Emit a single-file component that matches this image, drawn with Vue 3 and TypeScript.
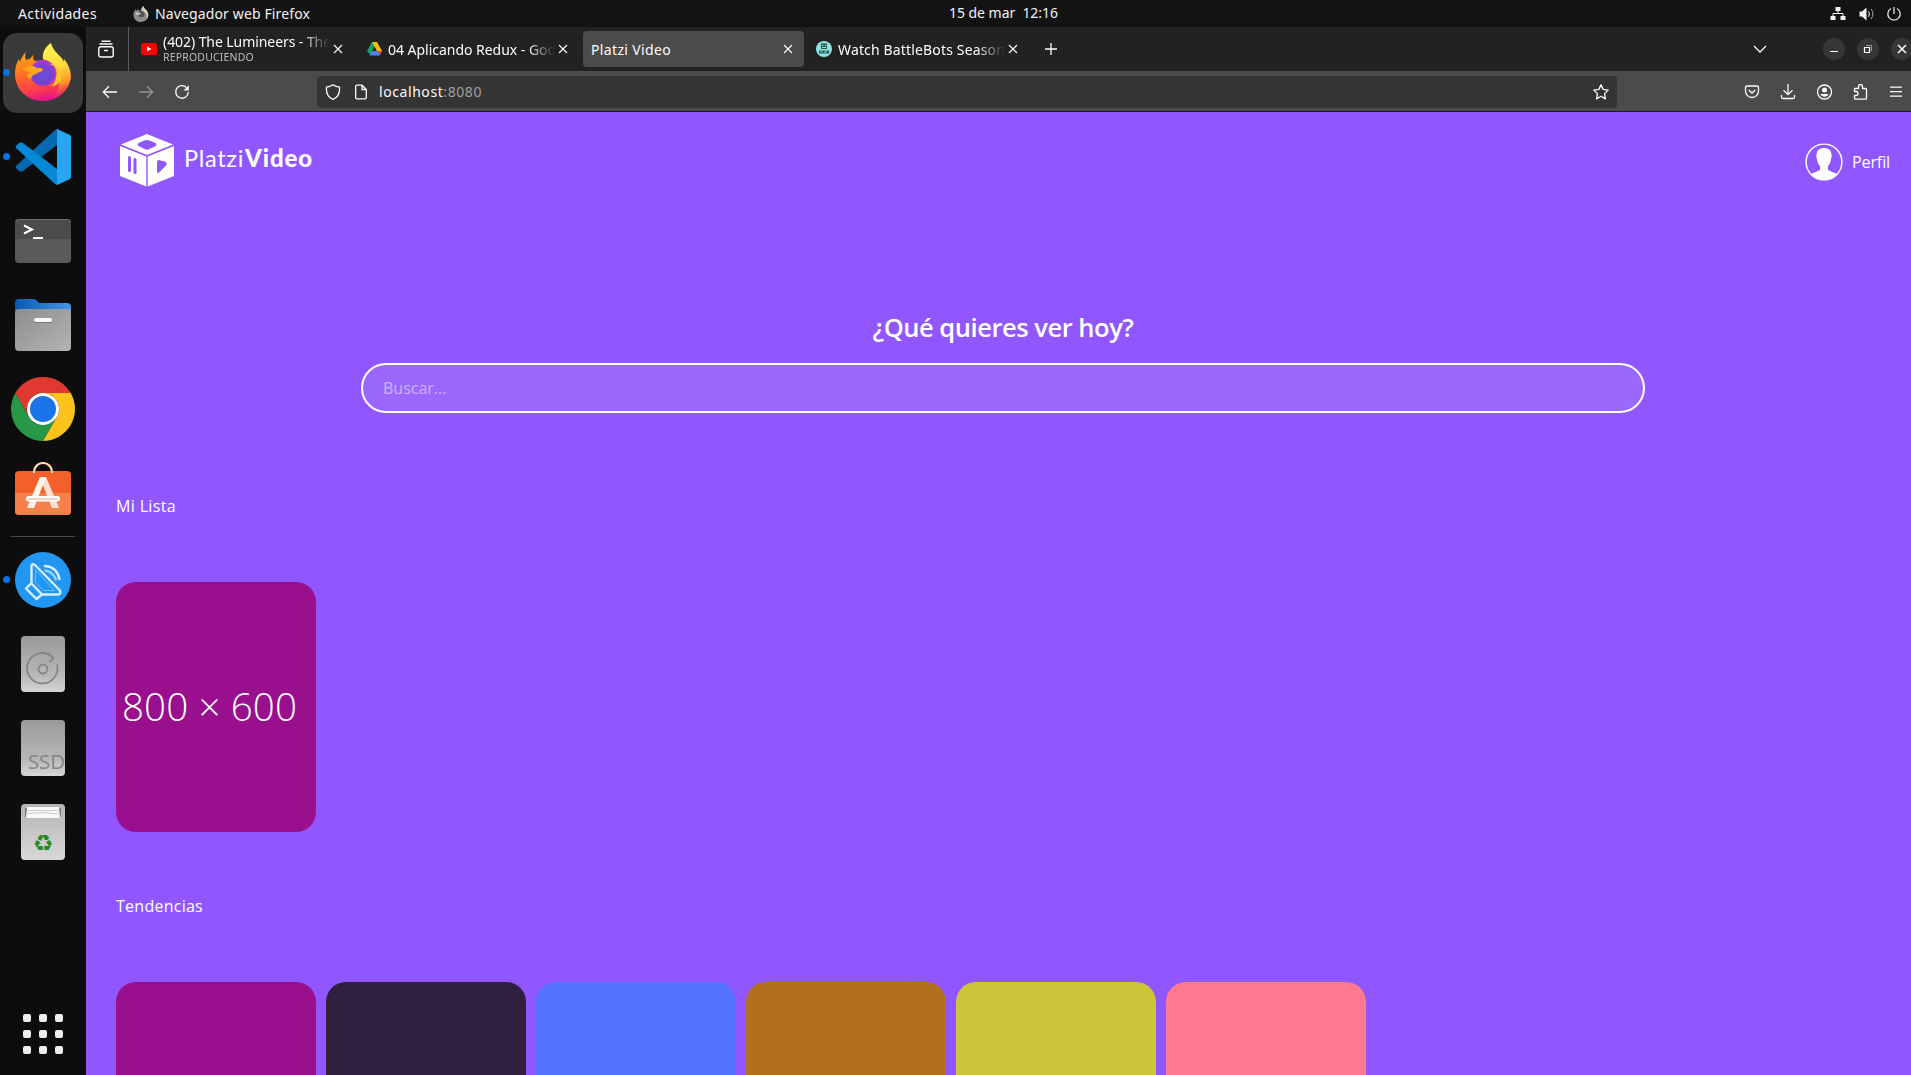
<script setup lang="ts">
import { ref, type Directive } from 'vue'

// Tracks a label out (or in) so that it takes the given width in pixels.
const vFit: Directive<HTMLElement, number> = {
  mounted(el, { value }) {
    const count = (el.textContent ?? '').length
    const natural = el.getBoundingClientRect().width
    el.style.letterSpacing = `${(value - natural) / count}px`
  },
}

interface Movie { id: number; color: string }

const query = ref('')
const trends: Movie[] = [
  { id: 1, color: '#990f8d' },
  { id: 2, color: '#302040' },
  { id: 3, color: '#5272ff' },
  { id: 4, color: '#b26f1e' },
  { id: 5, color: '#cbc53a' },
  { id: 6, color: '#ff7990' },
]
</script>

<template>
  <div class="desktop">
    <div class="topbar">
      <span v-fit="79" class="activities">Actividades</span>
      <svg class="app-mark" width="16" height="16" viewBox="0 0 56 58">
        <path fill="#8d8d8d" d="M11 8C9 12 10 15 11 18L18 11C18 15 20 17 24 18C29 13 30 6 36 0C38 9 46 12 50 18C62 38 48 58 28 58C4 58-6 32 5 18Z" />
        <circle cx="29" cy="29" r="12" fill="#555" />
        <path fill="#ccc" d="M36 0C38 9 46 12 50 18C56 28 56 38 49 48C51 32 44 22 32 17C28 15 31 6 36 0ZM8 25C16 22 22 26 28 26C25 32 18 30 16 34Z" />
      </svg>
      <span v-fit="155" class="app-name">Navegador web Firefox</span>
      <span v-fit="109" class="clock">15 de mar&nbsp; 12:16</span>
      <div class="status">
        <svg width="16" height="16" viewBox="0 0 16 16">
          <path fill="#f2f2f2" d="M5.500 1h5v4h-5zM.5 10h5v4h-5zM10.500 10h5v4h-5z" />
          <path fill="none" stroke="#f2f2f2" stroke-width="1" d="M8 5v2.500M3 10V7.500h10V10" />
        </svg>
        <svg width="16" height="16" viewBox="0 0 16 16">
          <path fill="#f2f2f2" d="M1.500 5.500h2.500L8.500 1.500v13l-4.500-4H1.500z" />
          <path fill="none" stroke="#f2f2f2" d="M10.500 5.300q2 2.700 0 5.400" />
          <path fill="none" stroke="#aaa" d="M13 3q4 5 0 10" />
        </svg>
        <svg width="16" height="16" viewBox="0 0 16 16">
          <path fill="none" stroke="#e2e2e2" stroke-width="1.300" d="M5 2.500a6.200 6.200 0 1 0 6 0M8 1v7" />
        </svg>
      </div>
    </div>

    <div class="workspace">
      <aside class="dock">
        <div class="dock-item current">
          <i class="dot" />
          <svg width="56" height="58" viewBox="0 0 56 58">
            <defs>
              <linearGradient id="fxBody" x1=".25" y1="0" x2=".5" y2="1">
                <stop offset=".1" stop-color="#ff9a12" /><stop offset=".45" stop-color="#ff6a2a" />
                <stop offset=".75" stop-color="#ff3d4b" /><stop offset="1" stop-color="#e3108c" />
              </linearGradient>
              <linearGradient id="fxFlame" x1=".4" y1="0" x2=".6" y2="1">
                <stop offset="0" stop-color="#fff44f" /><stop offset=".45" stop-color="#ffd83c" />
                <stop offset=".75" stop-color="#ff9a24" /><stop offset="1" stop-color="#ff5338" stop-opacity="0" />
              </linearGradient>
              <radialGradient id="fxGlobe" cx=".5" cy=".6" r=".65">
                <stop offset="0" stop-color="#6b4fd8" /><stop offset=".5" stop-color="#7542d0" /><stop offset="1" stop-color="#b833e1" />
              </radialGradient>
            </defs>
            <path fill="url(#fxBody)" d="M11 9C10 12 10 15 11 17C13 16 14 16 15 16C16 14 17 13 18 12C18 15 18 16 20 18C28 18 32 14 40 14L50 20C54 25 56 31 56 34C54 48 43 58 28 58C12 58 0 46 0 31C0 24 2 19 4 16L5 19C6 15 8 12 11 9Z" />
            <path fill="url(#fxFlame)" d="M36 0C38 9 47 13 49 19L49 16C55 23 57 31 55 38C53 48 44 54 37 55C45 49 45 38 43 31C41 20 34 18 28 16C27 9 31 3 36 0Z" />
            <circle cx="28" cy="30" r="13" fill="url(#fxGlobe)" />
            <path fill="#ffa51e" d="M8 26C12 22 17 22 20 24C23 26 26 24 28 26C28 29 23 29 21 31C18 32 16.500 33 16 36C14 36 12 34 12 32L15 29C12 29 10 28 8 26Z" />
            <path fill="#ffc634" d="M34 21C41 22 43 28 41 35C40 40 38 42 36 43C43 44 47 37 46 30C44 23 38 20 34 21Z" />
          </svg>
        </div>
        <div class="dock-item">
          <i class="dot" />
          <svg width="56" height="56" viewBox="0 0 56 56">
            <path fill="#0569ae" d="M1 37 40 1 42 0V16L8 42Q6 43 4 42L1 39Q0 38 1 37Z" />
            <path fill="#0588d6" d="M1 19Q0 18 1 17L4 14Q6 13 8 14L42 40V56L40 55Z" />
            <path fill="#26a7f3" d="M42 0 55 6Q56 7 56 8V48Q56 49 55 50L42 56Z" />
          </svg>
        </div>
        <div class="dock-item">
          <svg width="56" height="44" viewBox="0 0 56 44">
            <rect width="56" height="44" rx="4" fill="#595959" />
            <path fill="#4b4b4b" d="M0 20V4Q0 0 4 0H52Q56 0 56 4V20Z" />
            <path fill="none" stroke="#777" stroke-width=".8" d="M1 3Q2 .5 4 .5H52Q54 .5 55 3" />
            <path fill="none" stroke="#fff" stroke-width="2" d="M9 6.500 17 10.500 9 14.500M18 19H28" />
          </svg>
        </div>
        <div class="dock-item">
          <svg width="56" height="52" viewBox="0 0 56 52">
            <defs>
              <linearGradient id="folder" x2="1" y2="1"><stop stop-color="#8d8d8d" /><stop offset="1" stop-color="#b4b4b4" /></linearGradient>
              <linearGradient id="folderBack" x2="1"><stop stop-color="#0759b3" /><stop offset="1" stop-color="#4795eb" /></linearGradient>
            </defs>
            <path fill="url(#folderBack)" d="M0 20V4Q0 0 4 0H18Q20 0 21 1L24 4H52Q56 4 56 8V20Z" />
            <rect y="10" width="56" height="42" rx="4" fill="url(#folder)" />
            <rect x="19" y="20" width="18" height="4" rx="2" fill="#777" />
            <rect x="19" y="19" width="18" height="4" rx="2" fill="#fafafa" />
          </svg>
        </div>
        <div class="dock-item">
          <svg width="64" height="64" viewBox="0 0 64 64">
            <path fill="#e03a30" d="M4.300 16A32 32 0 0 1 59.700 16H32A16 16 0 0 0 18.100 40Z" />
            <path fill="#279847" d="M4.300 16A32 32 0 0 0 32 64L45.900 40A16 16 0 0 1 18.100 40Z" />
            <path fill="#fcc31c" d="M59.700 16A32 32 0 0 1 32 64L45.900 40A16 16 0 0 0 32 16Z" />
            <circle cx="32" cy="32" r="16" fill="#fff" />
            <circle cx="32" cy="32" r="13" fill="#1a73e8" />
          </svg>
        </div>
        <div class="dock-item store">
          <svg width="56" height="53" viewBox="0 0 56 53">
            <rect y="9" width="56" height="44" rx="4" fill="#f4602a" />
            <path fill="#f58049" d="M0 31H56V49Q56 53 52 53H4Q0 53 0 49Z" />
            <path fill="none" stroke="#fbdcae" stroke-width="2.200" d="M19 11V10A9 9 0 0 1 37 10V11" />
            <path fill="#fff3ee" d="M25 15H31L44 46H37L28 23 19 46H12Z" />
            <path fill="#fcd3c2" d="M28 23 31 15 44 46H37Z" opacity=".6" />
            <rect x="11" y="34" width="34" height="5.500" rx="2.700" fill="#fff" />
            <path stroke="#f9cfc0" stroke-width="2" d="M13 37H43" />
          </svg>
        </div>
        <div class="dock-line" />
        <div class="dock-item">
          <i class="dot" />
          <svg width="56" height="56" viewBox="0 0 56 56">
            <circle cx="28" cy="28" r="28" fill="#2196f3" />
            <g fill="none" stroke="#d8efff" stroke-width="2.400" stroke-linejoin="round" stroke-linecap="round">
              <path d="M16.500 13.500Q18 11 20.500 13.500L44.500 38Q47 41.500 43 42.500L27 42.500L21.500 47L11 36.500L16.500 31Z" />
              <path d="M17 32 26.500 42" />
              <path d="M30 14Q42 15 44.500 27" />
              <path d="M30.500 18.500Q38 20 41 27.500" stroke="#9dd3fc" />
              <path d="M20.500 18V30.500L28.500 38.500H39Z" stroke="#6dbff8" stroke-width="1" />
            </g>
          </svg>
        </div>
        <div class="dock-item">
          <svg width="44" height="56" viewBox="0 0 44 56">
            <defs><linearGradient id="metal" x2="0" y2="1"><stop stop-color="#9a9a9a" /><stop offset=".7" stop-color="#b7b7b7" /><stop offset="1" stop-color="#d6d6d6" /></linearGradient></defs>
            <rect width="44" height="56" rx="4" fill="url(#metal)" />
            <g fill="none" stroke="#858585" stroke-width="1.800">
              <circle cx="22" cy="33" r="4.500" />
              <path d="M36 28.500A15.200 15.200 0 1 1 32.500 22L28.500 26" />
            </g>
          </svg>
        </div>
        <div class="dock-item">
          <div class="ssd"><span v-fit="37">SSD</span></div>
        </div>
        <div class="dock-item">
          <div class="trash">
            <svg width="36" height="12" viewBox="0 0 36 12">
              <path fill="#777" d="M0 1H36V10H0Z" /><path fill="#f8f8f8" d="M2 0H34L35 11H1Z" />
              <path fill="none" stroke="#c9c9c9" d="M2 3.500H33M2 6.500Q18 4.500 34 7" />
            </svg>
            <span>♻</span>
          </div>
        </div>
        <div class="apps"><i v-for="n in 9" :key="n" /></div>
      </aside>

      <section class="browser">
        <div class="tabs">
          <div class="view">
            <svg width="16" height="18" viewBox="0 0 16 18">
              <g fill="none" stroke="#fbfbfe" stroke-width="1.400" stroke-linecap="round">
                <path d="M4 1.200H12M2 4H14" /><rect x=".8" y="6.700" width="14.400" height="10.300" rx="2" /><path d="M6.500 10.500H9.500" />
              </g>
            </svg>
          </div>
          <div class="tab youtube">
            <svg width="16" height="12" viewBox="0 0 16 12"><rect width="16" height="12" rx="2.500" fill="red" /><path fill="#fff" d="M6 3.500 10.500 6 6 8.500Z" /></svg>
            <div class="label two">
              <span v-fit="168">(402) The Lumineers - The</span>
              <small v-fit="91">REPRODUCIENDO</small>
            </div>
            <svg class="x" width="10" height="10" viewBox="0 0 10 10"><path d="M1 1 9 9M9 1 1 9" /></svg>
          </div>
          <div class="tab drive">
            <svg width="15" height="14" viewBox="0 0 15 14">
              <path fill="#11a65b" d="M5 0H10L7.500 4.500 3 12.500 0 9Z" /><path fill="#fbbc04" d="M5 0H10L15 9H10Z" /><path fill="#4285f4" d="M4.500 9H15L12.500 13.500H2.500Z" /><path fill="#ea4335" d="M10.500 9H15L12.700 13Z" />
            </svg>
            <div class="label"><span v-fit="168">04 Aplicando Redux - Goo</span></div>
            <svg class="x" width="10" height="10" viewBox="0 0 10 10"><path d="M1 1 9 9M9 1 1 9" /></svg>
          </div>
          <div class="tab active">
            <div class="label"><span v-fit="80">Platzi Video</span></div>
            <svg class="x" width="10" height="10" viewBox="0 0 10 10"><path d="M1 1 9 9M9 1 1 9" /></svg>
          </div>
          <div class="tab bots">
            <svg width="16" height="16" viewBox="0 0 16 16">
              <circle cx="8" cy="8" r="8" fill="#8be5df" /><path fill="#2d5759" d="M5 2.500H11V8H5ZM3 9.500H13V12.500H3Z" />
              <path stroke="#8be5df" d="M6 4.500H7.500M9 4.500H10.500M6 6.500H10M4.500 11H6.500M8 11H11" />
            </svg>
            <div class="label"><span v-fit="167">Watch BattleBots Season</span></div>
            <svg class="x" width="10" height="10" viewBox="0 0 10 10"><path d="M1 1 9 9M9 1 1 9" /></svg>
          </div>
          <svg class="plus" width="12" height="12" viewBox="0 0 12 12"><path fill="none" stroke="#fbfbfe" stroke-width="1.300" d="M6 0V12M0 6H12" /></svg>
          <div class="window">
            <svg class="chevron" width="14" height="8" viewBox="0 0 14 8"><path fill="none" stroke="#fbfbfe" stroke-width="1.300" d="M1 1 7 7 13 1" /></svg>
            <button><svg width="10" height="10" viewBox="0 0 10 10"><path fill="none" stroke="#fff" d="M1 7.500H9" /></svg></button>
            <button><svg width="10" height="10" viewBox="0 0 10 10"><path fill="none" stroke="#fff" stroke-width="1.200" d="M1.500 3.500H6.500V8.500H1.500Z" /><path fill="none" stroke="#999" d="M3 1.500H8.500V7" /></svg></button>
            <button><svg width="10" height="10" viewBox="0 0 10 10"><path fill="none" stroke="#fff" stroke-width="1.500" d="M1 1 9 9M9 1 1 9" /></svg></button>
          </div>
        </div>

        <div class="toolbar">
          <div class="nav">
            <svg width="16" height="16" viewBox="0 0 16 16"><path d="M15 8H1.500M7 2.300 1.300 8 7 13.700" /></svg>
            <svg class="off" width="16" height="16" viewBox="0 0 16 16"><path d="M1 8H14.500M9 2.300 14.700 8 9 13.700" /></svg>
            <svg width="16" height="16" viewBox="0 0 16 16"><path d="M12.500 3.500A6.300 6.300 0 1 0 14.300 8" /><path d="M9.500 6.500H14.800V1.200Z" class="solid" /></svg>
          </div>
          <div class="url">
            <svg width="16" height="16" viewBox="0 0 16 16"><path d="M8 .8Q5 3 1.500 3.200C1 9 3 13.500 8 15.300C13 13.500 15 9 14.500 3.200Q11 3 8 .8Z" /></svg>
            <svg width="16" height="16" viewBox="0 0 16 16"><path d="M2.700 2.500Q2.700 1.200 4 1.200H9L13.300 5.500V13.500Q13.300 14.800 12 14.800H4Q2.700 14.800 2.700 13.500ZM9 1.200V5.500H13.300" /></svg>
            <span v-fit="103" class="address">localhost<em>:8080</em></span>
            <svg class="star" width="16" height="16" viewBox="0 0 16 16"><path stroke-linejoin="round" d="M8 .9 10.200 5.400 15.200 6.100 11.600 9.600 12.400 14.900 8 12.300 3.600 14.900 4.400 9.600 .8 6.100 5.800 5.400Z" /></svg>
          </div>
          <div class="tools">
            <svg width="16" height="16" viewBox="0 0 16 16"><path d="M3 2H13Q14.500 2 14.500 3.500V7A6.500 6.500 0 0 1 1.500 7V3.500Q1.500 2 3 2ZM4.800 6 8 9 11.200 6" /></svg>
            <svg width="16" height="16" viewBox="0 0 16 16"><path d="M8 0V10.500M3.500 6.200 8 10.700 12.500 6.200M1.500 11V13Q1.500 14.500 3 14.500H13Q14.500 14.500 14.500 13V11" /></svg>
            <svg width="16" height="16" viewBox="0 0 16 16"><circle cx="8.500" cy="8" r="7" /><circle cx="8.500" cy="6" r="2.500" class="solid" /><path class="solid" d="M4.500 10H12.500Q11.500 12.800 8.500 12.800T4.500 10Z" /></svg>
            <svg width="16" height="16" viewBox="0 0 16 16"><path stroke-linejoin="round" d="M2.500 4.500H6.500V2.500A2 2 0 0 1 10.500 2.500V4.500H13.500Q14.500 4.500 14.500 5.500V14Q14.500 15.200 13.500 15.200H3.500Q2.500 15.200 2.500 14V11.500H4A2 2 0 0 0 4 7.500H2.500Z" /></svg>
            <svg width="16" height="16" viewBox="0 0 16 16"><path d="M2 3.200H14M2 7.700H14M2 12.200H14" /></svg>
          </div>
        </div>

        <main class="page">
          <header class="header">
            <div class="brand">
              <svg width="54" height="53" viewBox="0 0 54 53">
                <path fill="#fff" d="M27 0 53 10.500 27 21 1 10.500ZM0 12 26.300 22.500V52.500L0 42ZM54 12 27.700 22.500V52.500L54 42Z" />
                <g fill="#8f57fd"><path d="M24.500 6.500Q27 5.500 29.500 6.500L35.500 9Q37.500 10.500 35.500 12L29.500 15Q27 16.500 24.500 15L18.500 12Q16.500 10.500 18.500 9Z" /><rect x="8" y="22" width="3" height="16" rx="1.500" /><rect x="13.500" y="24" width="3" height="16" rx="1.500" /><path d="M37 28Q37 26 39 26L46 28Q47.500 29 46.500 31L39 38.500Q37 40 37 37Z" /></g>
              </svg>
              <div class="wordmark"><span v-fit="60">Platzi</span><b v-fit="68">Video</b></div>
            </div>
            <div class="profile">
              <svg width="38" height="38" viewBox="0 0 38 38">
                <circle cx="19" cy="19" r="17.900" fill="none" stroke="#fff" stroke-width="1.400" />
                <path fill="#fff" d="M19 5Q26.500 5 26.500 12Q27 14 26 16Q25.500 21 23 23V27Q27 29 32.500 31A18 18 0 0 1 5.500 31Q11 29 15 27V23Q12.500 21 12 16Q11 14 11.500 12Q11.500 5 19 5Z" />
              </svg>
              <span v-fit="38">Perfil</span>
            </div>
          </header>
          <section class="search">
            <h2><span v-fit="261">¿Qué quieres ver hoy?</span></h2>
            <input v-model="query" type="text" placeholder="Buscar...">
          </section>
          <h3><span v-fit="60">Mi Lista</span></h3>
          <div class="carousel"><article class="card mine"><span v-fit="175">800 × 600</span></article></div>
          <h3><span v-fit="87">Tendencias</span></h3>
          <div class="carousel"><article v-for="m in trends" :key="m.id" class="card" :style="{ background: m.color }" /></div>
        </main>
      </section>
    </div>
  </div>
</template>

<style>
body { overflow: hidden; }
</style>

<style scoped>
.desktop { height: 100vh; display: flex; flex-direction: column; overflow: hidden; background: #0d0d0d; color: #f2f2f2; font: 14px/18px "Noto Sans", "Open Sans", sans-serif; }
span, b, small { display: inline-block; white-space: nowrap; }
svg { display: block; flex: none; }
.topbar { height: 27px; flex: none; display: flex; align-items: center; background: #131313; position: relative; }
.activities { margin-left: 18px; }
.app-mark { margin-left: 36px; margin-right: 6px; }
.clock { position: absolute; left: 949px; top: 4px; }
.status { display: flex; gap: 12px; margin-left: auto; margin-right: 9px; }
.workspace { flex: 1; min-height: 0; display: flex; }
.dock { width: 86px; flex: none; padding-top: 4px; box-sizing: border-box; display: flex; flex-direction: column; align-items: center; }
.dock-item { width: 80px; height: 80px; margin: 2px 3px; flex: none; display: flex; align-items: center; justify-content: center; position: relative; }
.current { background: #3a3a3a; border-radius: 14px; }
.current svg { margin-top: -2px; }
.store svg { margin-top: -9px; }
.dot { position: absolute; left: 0; top: 36px; width: 7px; height: 7px; border-radius: 50%; background: #0073e5; }
.dock-line { width: 64px; height: 1px; background: #484848; margin: 1px 0; }
.ssd { width: 44px; height: 56px; border-radius: 4px; background: linear-gradient(#9a9a9a, #b7b7b7 70%, #d6d6d6); display: flex; align-items: flex-end; justify-content: flex-end; overflow: hidden; color: #858585; font: 400 20.500px/26px "Open Sans", sans-serif; }
.ssd span { margin-bottom: 2px; }
.trash { width: 44px; height: 56px; border-radius: 4px; background: linear-gradient(#b4b4b4, #d8d8d8); display: flex; flex-direction: column; align-items: center; padding-top: 3px; box-sizing: border-box; color: #26891c; }
.trash span { font: 23px/24px "DejaVu Sans", sans-serif; margin-top: 12px; }
.apps { margin-top: auto; margin-bottom: 21px; display: grid; grid-template-columns: repeat(3, 8px); gap: 8px; }
.apps i { height: 8px; border-radius: 2px; background: #eee; }

.browser { flex: 1; min-width: 0; display: flex; flex-direction: column; overflow: hidden; }
.tabs { height: 44px; flex: none; display: flex; align-items: center; background: #222; }
.view { width: 43px; height: 44px; box-sizing: border-box; padding-left: 12px; border-right: 1px solid #5c5c5c; display: flex; align-items: center; padding-bottom: 1px; }
.tab { height: 36px; box-sizing: border-box; display: flex; align-items: center; flex: none; gap: 6px; color: #fbfbfe; }
.label { flex: 1; min-width: 0; overflow: hidden; mask-image: linear-gradient(to left, transparent, #000 28px); padding-top: 1px; }
.active .label { mask-image: none; }
.two { display: flex; flex-direction: column; align-items: flex-start; padding: 0; margin-top: -2px; }
.two span { line-height: 19px; }
.two small { font-size: 10.500px; line-height: 13px; color: #bbb; }
.x { fill: none; stroke: #fbfbfe; stroke-width: 1.100; margin-left: -3px; }
.youtube { width: 225px; padding: 0 11px 0 12px; }
.drive { width: 229px; padding: 0 15px 0 13px; }
.active { width: 221px; padding: 0 11px 0 8px; background: #4b4b4b; border-radius: 4px; }
.bots { width: 225px; padding: 0 11px 0 12px; }
.plus { margin-left: 16px; }
.window { margin-left: auto; margin-right: -2px; display: flex; align-items: center; gap: 12px; }
.chevron { margin-right: 44px; }
.window button { width: 22px; height: 22px; flex: none; padding: 0; border: 0; border-radius: 50%; background: #363636; display: grid; place-items: center; }
.toolbar { height: 41px; flex: none; box-sizing: border-box; padding-top: 1px; border-bottom: 1px solid #1c1c1c; background: #4b4b4b; display: flex; align-items: center; }
.toolbar svg { fill: none; stroke: #fbfbfe; stroke-width: 1.300; }
.toolbar .solid { fill: #fbfbfe; stroke: none; }
.nav { display: flex; gap: 20px; padding-left: 16px; width: 215px; }
.off { opacity: .4; }
.url { width: 1300px; height: 32px; flex: none; border-radius: 4px; background: #343434; display: flex; align-items: center; gap: 12px; padding: 0 8px; box-sizing: border-box; }
.address { margin-left: -2px; color: #fbfbfe; }
.address em { color: #a0a0a0; font-style: normal; }
.star { margin-left: auto; }
.tools { margin-left: auto; margin-right: 7px; display: flex; gap: 20px; }

.page { flex: 1; min-height: 0; overflow: hidden; background: #8f57fd; color: #fff; font-family: "Open Sans", "Noto Sans", sans-serif; }
.header { height: 100px; display: flex; align-items: center; justify-content: space-between; padding: 0 21px 0 34px; }
.brand { display: flex; align-items: center; gap: 10px; padding-top: 3px; margin-bottom: 7px; }
.wordmark { display: flex; align-items: baseline; gap: 1px; font: 23.500px/30px Lato, sans-serif; margin-top: -5px; }
.wordmark b { font-size: 24px; font-weight: 900; }
.profile { display: flex; align-items: center; gap: 9px; font-size: 16px; }
.profile span { font-weight: 400; margin-top: -1px; }
.search { height: 240px; box-sizing: border-box; padding: 98px 0 0 9px; display: flex; flex-direction: column; align-items: center; }
h2 { margin: 0 0 19px; font-size: 25.500px; line-height: 34px; font-weight: 550; }
.search input { width: 1284px; height: 50px; flex: none; box-sizing: border-box; border: 2px solid #fff; border-radius: 25px; background: rgba(255, 255, 255, .1); padding: 0 20px; color: #fff; font: 16px "Open Sans", sans-serif; outline: none; }
.search input::placeholder { color: rgba(255, 255, 255, .5); opacity: 1; font-weight: 400; }
h3 { margin: 0; padding-left: 30px; height: 30px; padding-top: 39px; font-size: 16px; line-height: 30px; font-weight: 520; }
.carousel { display: flex; gap: 10px; padding: 61px 0 20px 30px; height: 250px; }
.card { width: 200px; height: 250px; flex: none; border-radius: 20px; display: flex; align-items: center; }
.mine { background: #990f8d; }
.mine span { margin: -3px 0 0 6px; font: 300 38.500px/50px "Open Sans", sans-serif; }
</style>
